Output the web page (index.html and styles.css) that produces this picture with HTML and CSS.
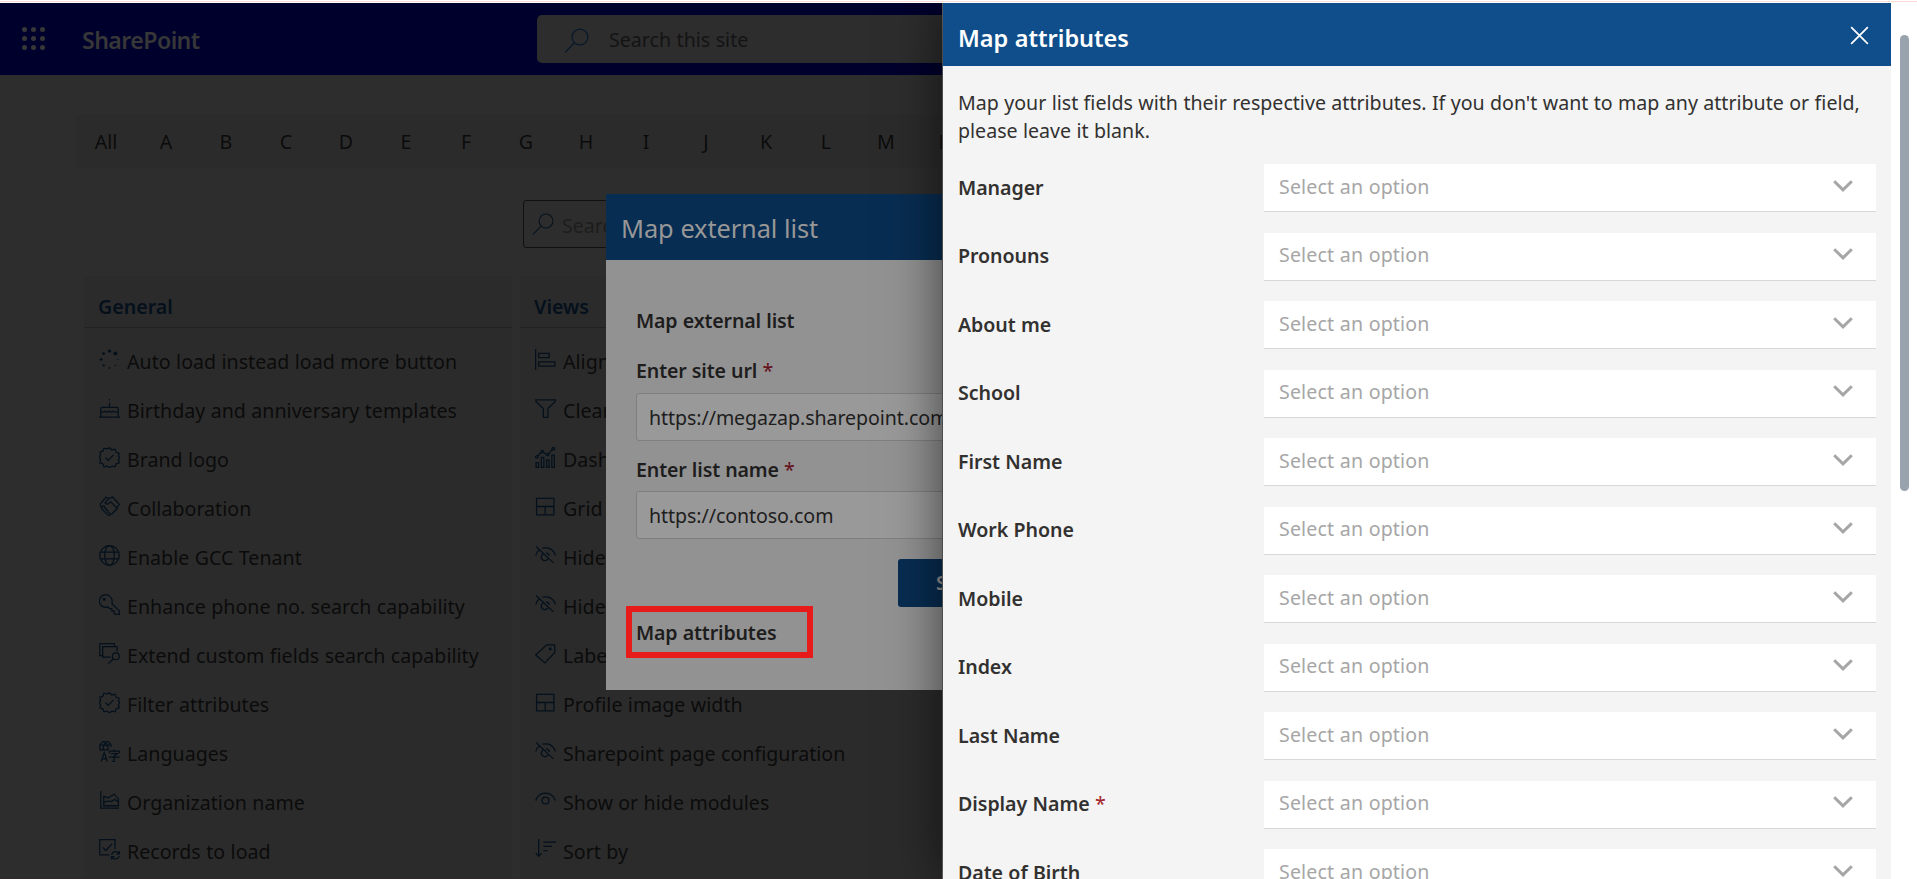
FILE: index.html
```
<!DOCTYPE html>
<html lang="en">
<head>
<meta charset="utf-8">
<title>Map attributes</title>
<link rel="stylesheet" href="styles.css">
</head>
<body>
<svg class="defs" width="0" height="0">
  <symbol id="search" viewBox="0 0 24 24"><circle cx="15.3" cy="8.7" r="7.6"/><path d="M10 14.2 1 23.4"/></symbol>
  <symbol id="dots" viewBox="0 0 20 20"><g fill="currentColor" stroke="none"><circle cx="10" cy="2" r="1.6"/><circle cx="15.6" cy="4.3" r="1.9"/><circle cx="4.4" cy="4.4" r="1.4"/><circle cx="2" cy="10" r="1.3"/><circle cx="4.4" cy="15.6" r="1.1"/><circle cx="10" cy="18" r=".9"/><circle cx="15.6" cy="15.6" r=".7"/><circle cx="18" cy="10" r=".6"/></g></symbol>
  <symbol id="cake" viewBox="0 0 20 20"><path d="M0 18.3h20M1.7 18v-7.500q0-1.500 1.500-1.500h13.600q1.500 0 1.500 1.500V18M1.700 12.500q2 2 4 0q2 2 4 0q2 2 4 0q2 2 4.500 0M10 9V4.500M10 1v1.400"/></symbol>
  <symbol id="badge" viewBox="0 0 20 20"><path d="M10 .8l2.300 2 3-.7 1 2.900 2.900 1-.7 3L20 10l-1.500 2 .7 3-2.900 1-1 2.900-3-.7-2.300 1.500-2.300-1.500-3 .7-1-2.900-2.900-1 .7-3L.3 10l1.200-2-.7-3 2.900-1 1-2.900 3 .7zM6.200 10.300l2.600 2.500 5-5.300"/></symbol>
  <symbol id="hands" viewBox="0 0 20 20"><path d="M1 8 6.500 1.200l3 1L13 1l6.300 7-2.500 3.500M9.500 2.300 5.800 6.500q1.700 2.500 4 .2l1.400-1.200 6 6.200q0 2-2 1.800q.2 2-2 2q-.3 2-2 1.700q-1.300 2.300-3 .8L2.500 12 1 8M2 11.500l2-2q1.800 0 1.400 2q2 0 1.600 2q2 0 1.600 2q1.800.4 1.400 2"/></symbol>
  <symbol id="globe" viewBox="0 0 20 20"><circle cx="10" cy="10" r="9.300"/><ellipse cx="10" cy="10" rx="4.600" ry="9.300"/><path d="M1.500 6.700h17M1.500 13.300h17"/></symbol>
  <symbol id="key" viewBox="0 0 20 20"><path d="M12.300 9.300q1-4-1.500-6.600a6 6 0 1 0-4.300 10l2-.3 1.700 1.600h2v2h2v2l1.500 1.300H19.400v-3.200z"/><circle cx="5" cy="5" r=".9" fill="currentColor"/></symbol>
  <symbol id="extend" viewBox="0 0 20 20"><path d="M3 12H.7V.7h14V3M11 13.500H3.500V3.500h13.700V8M9 19.500l4.500-4.300"/><circle cx="16" cy="12.600" r="3.300"/></symbol>
  <symbol id="lang" viewBox="0 0 20 20"><path d="M9 8.500H1M.7 6a5.300 5.300 0 0 1 11-.6M.7 6q0 2 1 3.500M1 4h10M4.200 9q-1-4 2-8M8.400 9q1-4-2-8M2 19.500 5 11.300l3 8.200M3 17h4M14.500 8v1.700M10 11.700V9.700h9.300v2M11.500 12h6l-3 2.400v4.900h-2.300M9.500 15.300h10.200"/></symbol>
  <symbol id="chart" viewBox="0 0 20 20"><path d="M1.700 1v16.300H19M4.500 15V6l4.200 1.500L14.500 4l4 4.500V15zM4.500 12l4-1.500 3 .5 3.500-2 3.500 2.500"/></symbol>
  <symbol id="records" viewBox="0 0 20 20"><path d="M10 15.200H.7V.7h14.500v9M3.500 8l3 3L12.500 4.500M12 15a4 4 0 0 1 7-1.500M19.400 11.500v2.700h-2.700M19.400 16a4 4 0 0 1-7 1.500M12 19.500v-2.700h2.700"/></symbol>
  <symbol id="align" viewBox="0 0 20 20"><path d="M.6 0v20M3.500 4.200h10v4h-10zM3.500 12.300h15.500v4H3.500z"/></symbol>
  <symbol id="filter" viewBox="0 0 20 20"><path d="M.8 1.700h18.500v1.500L12.300 10v8.500H8V10L.8 3.200z"/></symbol>
  <symbol id="dash" viewBox="0 0 20 20"><path d="M1 19.300v-4.500h2.400v4.500zM6 19.300V9.800h2.400v9.500zM11 19.300v-7h2.400v7zM16 19.300V7.800h2.400v11.500zM2.500 8.700 6 5M8 5l3 2M13 6.500l3.300-4"/><circle cx="1.700" cy="9.500" r="1.200"/><circle cx="7" cy="4.300" r="1.200"/><circle cx="12" cy="7.200" r="1.200"/><circle cx="17.500" cy="1.700" r="1.200"/></symbol>
  <symbol id="grid" viewBox="0 0 20 20"><path d="M1.500 2.200h16.500v15.800H1.500zM1.500 10h16.500M9.700 10v8"/></symbol>
  <symbol id="hide" viewBox="0 0 20 20"><path d="M1 1.500 17.500 17M.8 10q.6-3.500 3.500-5.500M7 3q8-1.700 11.500 4.500.7 1.300.8 2.500M7.700 8.500a3.400 3.400 0 1 0 4.600 4.700M10.500 7.500q3 .5 3 3"/></symbol>
  <symbol id="tag" viewBox="0 0 20 20"><path d="M.7 11.500 11 1.700h7.800V9L9.500 19z"/><circle cx="14.500" cy="5.700" r=".8" fill="currentColor"/></symbol>
  <symbol id="show" viewBox="0 0 20 20"><path d="M.7 10a9.500 8.800 0 0 1 18.600 0"/><circle cx="10" cy="10" r="3.300"/></symbol>
  <symbol id="sort" viewBox="0 0 20 20"><path d="M3.500 0v16.500M.7 13.500l2.800 3 2.800-3M8 3h12M8 7h8M8 11h4"/></symbol>
  <symbol id="chevron" viewBox="0 0 20 12"><path d="M1.200 1.200 10 9.800 18.800 1.200"/></symbol>
  <symbol id="close" viewBox="0 0 20 20"><path d="M1.200 1.200 18.800 18.800M18.800 1.200 1.200 18.800"/></symbol>
</svg>

<div class="page">
  <header class="topbar">
    <div class="waffle"><i></i><i></i><i></i><i></i><i></i><i></i><i></i><i></i><i></i></div>
    <div class="brand">SharePoint</div>
    <div class="site-search"><svg class="icon"><use href="#search"/></svg><span>Search this site</span></div>
  </header>
  <nav class="letters"><span>All</span><span>A</span><span>B</span><span>C</span><span>D</span><span>E</span><span>F</span><span>G</span><span>H</span><span>I</span><span>J</span><span>K</span><span>L</span><span>M</span><span>N</span></nav>
  <div class="list-search"><svg class="icon"><use href="#search"/></svg><span>Search</span></div>
  <div class="cards">
    <section class="card">
      <h2>General</h2>
      <ul>
        <li><svg class="icon"><use href="#dots"/></svg>Auto load instead load more button</li>
        <li><svg class="icon"><use href="#cake"/></svg>Birthday and anniversary templates</li>
        <li><svg class="icon"><use href="#badge"/></svg>Brand logo</li>
        <li><svg class="icon"><use href="#hands"/></svg>Collaboration</li>
        <li><svg class="icon"><use href="#globe"/></svg>Enable GCC Tenant</li>
        <li><svg class="icon"><use href="#key"/></svg>Enhance phone no. search capability</li>
        <li><svg class="icon"><use href="#extend"/></svg>Extend custom fields search capability</li>
        <li><svg class="icon"><use href="#badge"/></svg>Filter attributes</li>
        <li><svg class="icon"><use href="#lang"/></svg>Languages</li>
        <li><svg class="icon"><use href="#chart"/></svg>Organization name</li>
        <li><svg class="icon"><use href="#records"/></svg>Records to load</li>
      </ul>
    </section>
    <section class="card">
      <h2>Views</h2>
      <ul>
        <li><svg class="icon"><use href="#align"/></svg>Align</li>
        <li><svg class="icon"><use href="#filter"/></svg>Clear</li>
        <li><svg class="icon"><use href="#dash"/></svg>Dash</li>
        <li><svg class="icon"><use href="#grid"/></svg>Grid</li>
        <li><svg class="icon"><use href="#hide"/></svg>Hide</li>
        <li><svg class="icon"><use href="#hide"/></svg>Hide</li>
        <li><svg class="icon"><use href="#tag"/></svg>Label</li>
        <li><svg class="icon"><use href="#grid"/></svg>Profile image width</li>
        <li><svg class="icon"><use href="#hide"/></svg>Sharepoint page configuration</li>
        <li><svg class="icon"><use href="#show"/></svg>Show or hide modules</li>
        <li><svg class="icon"><use href="#sort"/></svg>Sort by</li>
      </ul>
    </section>
  </div>
</div>

<div class="modal">
  <div class="modal-head">Map external list</div>
  <div class="modal-body">
    <h3>Map external list</h3>
    <label>Enter site url <b>*</b></label>
    <div class="input">https://megazap.sharepoint.com</div>
    <label>Enter list name <b>*</b></label>
    <div class="input">https://contoso.com</div>
    <div class="save">Save</div>
    <div class="map-link">Map attributes</div>
  </div>
</div>

<aside class="panel">
  <header class="panel-head"><span>Map attributes</span><svg class="icon"><use href="#close"/></svg></header>
  <p>Map your list fields with their respective attributes. If you don't want to map any attribute or field,<br>please leave it blank.</p>
  <div class="fields">
    <div class="field"><span>Manager</span><div class="select">Select an option<svg class="icon"><use href="#chevron"/></svg></div></div>
    <div class="field"><span>Pronouns</span><div class="select">Select an option<svg class="icon"><use href="#chevron"/></svg></div></div>
    <div class="field"><span>About me</span><div class="select">Select an option<svg class="icon"><use href="#chevron"/></svg></div></div>
    <div class="field"><span>School</span><div class="select">Select an option<svg class="icon"><use href="#chevron"/></svg></div></div>
    <div class="field"><span>First Name</span><div class="select">Select an option<svg class="icon"><use href="#chevron"/></svg></div></div>
    <div class="field"><span>Work Phone</span><div class="select">Select an option<svg class="icon"><use href="#chevron"/></svg></div></div>
    <div class="field"><span>Mobile</span><div class="select">Select an option<svg class="icon"><use href="#chevron"/></svg></div></div>
    <div class="field"><span>Index</span><div class="select">Select an option<svg class="icon"><use href="#chevron"/></svg></div></div>
    <div class="field"><span>Last Name</span><div class="select">Select an option<svg class="icon"><use href="#chevron"/></svg></div></div>
    <div class="field"><span>Display Name <b>*</b></span><div class="select">Select an option<svg class="icon"><use href="#chevron"/></svg></div></div>
    <div class="field"><span>Date of Birth</span><div class="select">Select an option<svg class="icon"><use href="#chevron"/></svg></div></div>
  </div>
</aside>
<div class="scrollbar"></div>
</body>
</html>
```
FILE: styles.css
```
* { box-sizing: border-box; }
html, body { height: 100%; }
body {
  margin: 0;
  overflow: hidden;
  background: #fff;
  color: #323130;
  font: 19.6px/28px "Noto Sans", "Open Sans", sans-serif;
  letter-spacing: 0.02px;
  word-spacing: 0.3px;
  white-space: nowrap;
}
body::before {
  content: "";
  display: block;
  height: 3px;
  background: linear-gradient(#fff 1px, #fbdcd6 1px, #fbdcd6 2px, #fff 2px);
}
h2, h3, p, ul { margin: 0; padding: 0; font-size: inherit; font-weight: 600; }
.defs { position: absolute; }
.icon { flex: none; width: 21px; height: 21px; fill: none; stroke: currentColor; stroke-width: 1.2; overflow: visible; }

.page { width: 943px; height: 876px; overflow: hidden; border-bottom: 1px solid #30282b; background: #2d2d2d; color: #0b0b0b; }
.topbar { display: flex; align-items: center; height: 72px; padding-left: 22px; background: #00002d; }
.waffle { display: grid; grid-template-columns: repeat(3, 5px); gap: 4px; margin: -1px 37px 0 0; }
.waffle i { width: 5px; height: 5px; border-radius: 50%; background: #373737; }
.brand { width: 455px; padding-top: 2px; color: #373737; font-size: 23.2px; font-weight: 600; letter-spacing: -0.6px; }
.site-search { display: flex; align-items: center; flex: 1; height: 48px; padding-left: 27px; gap: 20px; border-radius: 5px 0 0 5px; background: #2d2d2d; color: #141414; }
.site-search span { padding-top: 2px; }
.site-search .icon { width: 25px; height: 25px; margin-top: 2px; color: #07192a; }
.letters { display: flex; align-items: center; height: 53px; margin: 40px 0 0 76px; padding-top: 1px; background: #2b2b2b; }
.letters span { flex: none; width: 60px; text-align: center; }
.list-search { display: flex; align-items: center; height: 48px; margin: 32px 0 28px 523px; padding-left: 8px; gap: 8px; border: 1px solid #111; border-radius: 3px; color: #1d1d1d; }
.list-search .icon { width: 22px; height: 22px; margin-top: -1px; color: #06131f; }
.list-search span { padding-top: 3px; }
.cards { display: grid; grid-template-columns: 428px 428px; gap: 8px; margin-left: 84px; }
.card { height: 620px; background: #2b2b2b; }
.card h2 { height: 52px; padding: 17px 15px 0 14px; border-bottom: 1px solid #222; color: #04101c; }
.card ul { padding: 9px 15px 0; list-style: none; font-weight: 400; }
.card li { display: flex; align-items: center; gap: 7px; height: 49px; }
.card li .icon { margin-top: -5px; color: #04111c; }

.modal { position: absolute; top: 194px; left: 606px; width: 480px; height: 496px; background: #929292; color: #1e1d1d; }
.modal-head { height: 66px; padding: 20px 15px 0; background: #082d52; color: #979797; font-size: 25.4px; letter-spacing: -0.1px; }
.modal-body { display: flex; flex-direction: column; padding: 47px 30px 0; }
.modal-body h3, .modal-body label, .map-link { height: 28px; font-weight: 600; letter-spacing: -0.15px; }
.modal-body label { margin-top: 22px; }
.modal-body b { color: #64101a; font-weight: 400; }
.input { flex: none; height: 48px; margin-top: 8px; padding: 10px 12px; border: 1px solid #7f7f7f; border-radius: 3px; background: #999; letter-spacing: -0.08px; }
.input + label { margin-top: 15px; }
.input + label + .input { margin-top: 7px; }
.save { width: 118px; height: 48px; margin: 20px 0 0 262px; padding: 10px 38px; border-radius: 3px; background: #082d52; color: #979797; font-weight: 600; }
.map-link { width: 187px; height: 52px; margin: -1px 0 0 -10px; padding: 7px 4px; border: 6px solid #e81b1b; }

.panel { position: absolute; top: 3px; left: 943px; width: 948px; height: 876px; background: #f4f4f4; box-shadow: 0 0 50px rgba(0, 0, 0, .6), -1px 0 #6c6c6c; clip-path: inset(0 0 0 -120px); }
.panel-head { display: flex; align-items: center; justify-content: space-between; height: 63px; padding: 6px 22px 0 15px; background: #0f4e8a; color: #fff; font-size: 23.5px; font-weight: 600; letter-spacing: 0; }
.panel-head .icon { width: 19px; height: 19px; margin-top: -4px; stroke-width: 1.8; }
.panel p { padding: 23px 15px 0; font-weight: 400; letter-spacing: 0; }
.fields { display: flex; flex-direction: column; gap: 20.5px; padding: 19px 15px 0; }
.field { display: grid; flex: none; grid-template-columns: 306px 612px; align-items: center; height: 48px; font-weight: 600; letter-spacing: -0.05px; }
.field > span { margin-top: -1px; }
.field b { color: #a4262c; font-weight: 400; }
.select { display: flex; align-items: center; justify-content: space-between; height: 48px; padding: 0 23px 2px 15px; border-bottom: 1px solid #d8d8d8; background: #fff; color: #a6a6a6; font-weight: 400; letter-spacing: 0.14px; }
.select .icon { width: 20px; height: 12px; margin-top: -2px; stroke-width: 3; }
.scrollbar { position: absolute; top: 35px; left: 1900px; width: 9px; height: 456px; border-radius: 5px; background: #98a3ad; }
```
